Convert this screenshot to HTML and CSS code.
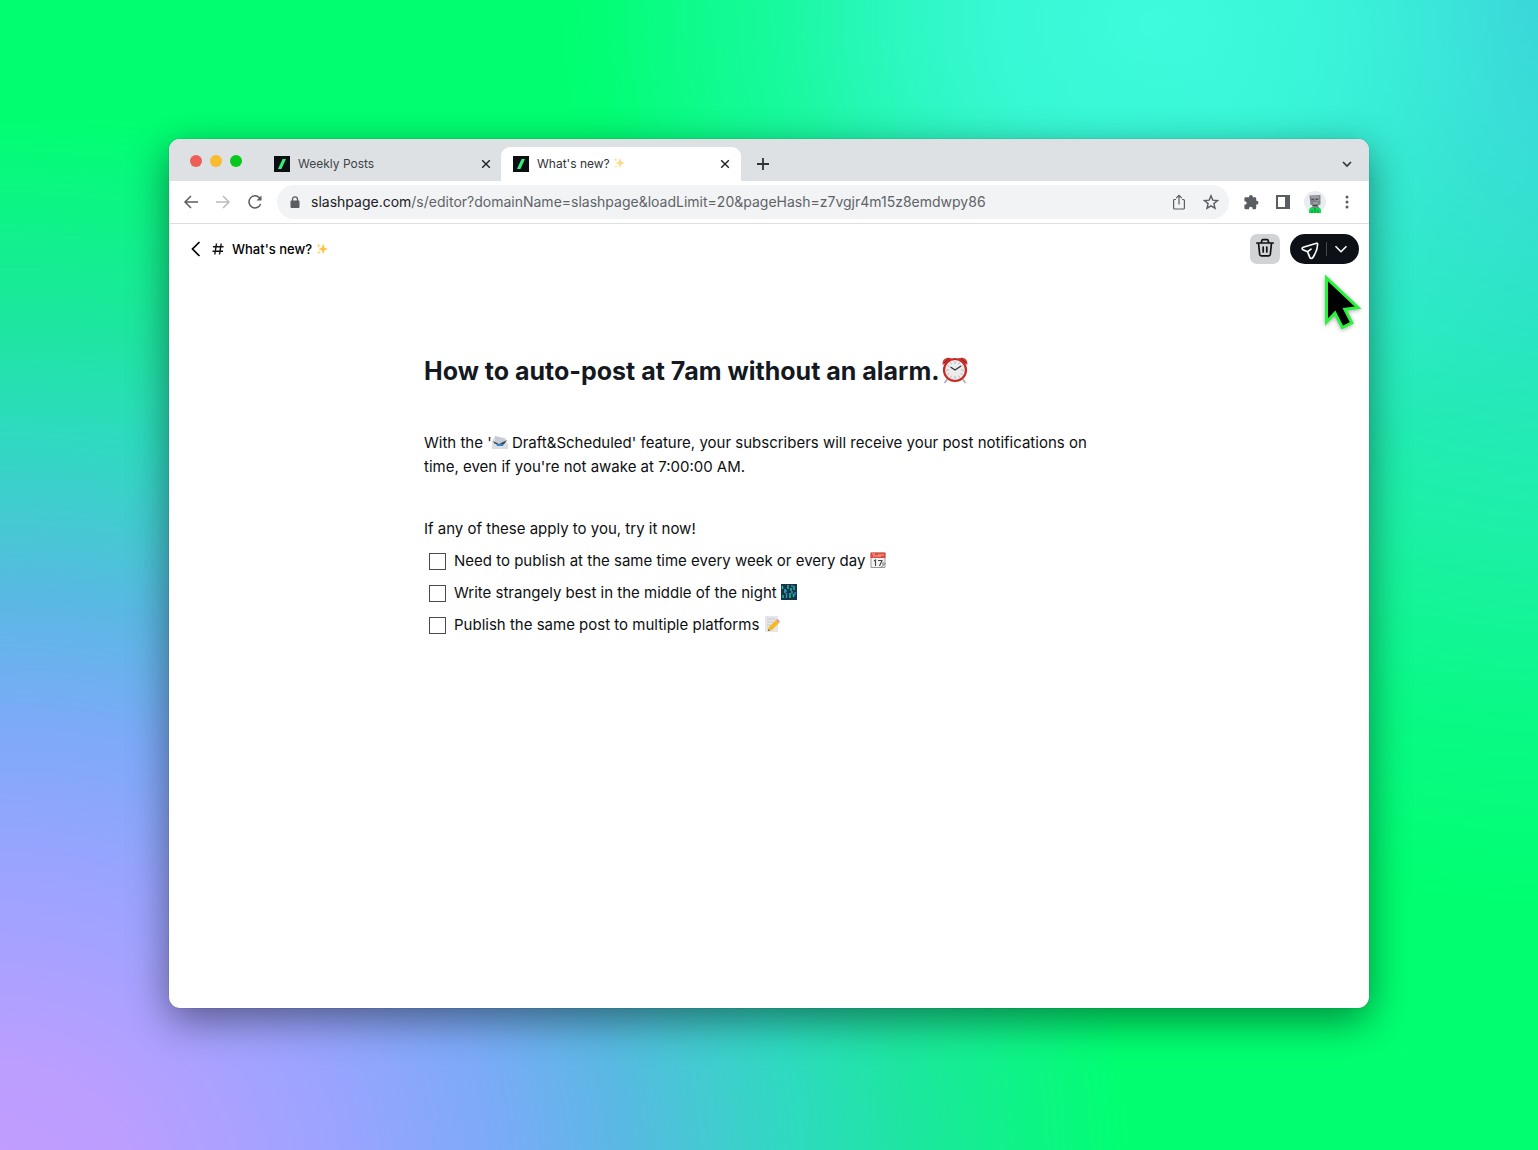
FILE: index.html
```html
<!DOCTYPE html>
<html lang="en">
<head>
<meta charset="utf-8">
<meta name="viewport" content="width=device-width, initial-scale=1">
<title>What's new?</title>
<link rel="stylesheet" href="styles.css">
</head>
<body>
<svg width="0" height="0" class="defs" aria-hidden="true">
  <symbol id="slash" viewBox="0 0 16 16"><path fill="#0b0f14" d="M0 0h16v16H0z"/><path fill="#34f07a" d="M8.6 3h3.4L7.4 13H4z"/></symbol>
  <symbol id="cross" viewBox="0 0 10 10"><path d="M1.2 1.2l7.6 7.6M8.8 1.2L1.2 8.8" fill="none" stroke="#202124" stroke-width="1.4"/></symbol>
  <symbol id="sparkles" viewBox="0 0 16 16"><path fill="#fbc33c" d="M9.500 1l1.800 5.200L16 8l-4.700 1.800L9.500 15 7.700 9.800 3 8l4.700-1.800z"/><path fill="#fbdc8c" d="M3.500 0l1 2.500L7 3.500l-2.500 1-1 2.500-1-2.500L0 3.500l2.500-1zM4 9.500l.9 2.100 2.100.9-2.100.9L4 15.500l-.9-2.100-2.100-.9 2.100-.9z"/></symbol>
</svg>
<main class="window">
  <header class="tabstrip">
    <div class="lights"><i class="light red"></i><i class="light yellow"></i><i class="light green"></i></div>
    <div class="tab">
      <svg class="favicon"><use href="#slash"/></svg>
      <span class="tab-title">Weekly Posts</span>
      <button class="plain" aria-label="Close tab"><svg width="10" height="10"><use href="#cross"/></svg></button>
    </div>
    <div class="tab active">
      <svg class="favicon"><use href="#slash"/></svg>
      <span class="tab-title">What's new? <svg class="spark faded"><use href="#sparkles"/></svg></span>
      <button class="plain" aria-label="Close tab"><svg width="10" height="10"><use href="#cross"/></svg></button>
    </div>
    <button class="plain new-tab" aria-label="New tab"><svg width="14" height="14" viewBox="0 0 14 14"><path d="M7 1v12M1 7h12" stroke="#303236" stroke-width="1.800"/></svg></button>
    <button class="plain tab-menu" aria-label="Search tabs"><svg width="12" height="12" viewBox="0 0 12 12"><path d="M2 4l4 4 4-4" fill="none" stroke="#303236" stroke-width="1.600"/></svg></button>
  </header>
  <nav class="toolbar">
    <button class="plain" aria-label="Back"><svg width="16" height="16" viewBox="0 0 16 16"><path d="M15 8H2M8 2L2 8l6 6" fill="none" stroke="#5a5d61" stroke-width="1.500"/></svg></button>
    <button class="plain" aria-label="Forward"><svg width="16" height="16" viewBox="0 0 16 16"><path d="M1 8h13M8 2l6 6-6 6" fill="none" stroke="#b9bcc0" stroke-width="1.500"/></svg></button>
    <button class="plain" aria-label="Reload"><svg width="16" height="16" viewBox="0 0 16 16"><path d="M13.600 10a6 6 0 1 1-1.200-6.200L13.500 5" fill="none" stroke="#5a5d61" stroke-width="1.500"/><path fill="#5a5d61" d="M14.500 1.500v5h-5z"/></svg></button>
    <div class="address">
      <svg class="lock" width="10" height="12" viewBox="0 0 10 12"><path d="M2.500 5V3.300a2.500 2.500 0 0 1 5 0V5" fill="none" stroke="#5a5d61" stroke-width="1.300"/><rect x="0.500" y="4.500" width="9" height="7.500" rx="1" fill="#5a5d61"/></svg>
      <label class="host" for="url">slashpage.com</label><input class="path" id="url" type="text" value="/s/editor?domainName=slashpage&amp;loadLimit=20&amp;pageHash=z7vgjr4m15z8emdwpy86">
      <button class="plain" aria-label="Share"><svg width="16" height="16" viewBox="0 0 16 16"><path d="M5 5.500H3.600a1 1 0 0 0-1 1V14a1 1 0 0 0 1 1h8.800a1 1 0 0 0 1-1V6.500a1 1 0 0 0-1-1H11M8 10.500V1.500M5.200 4.200L8 1.400l2.800 2.800" fill="none" stroke="#5a5d61" stroke-width="1.200"/></svg></button>
      <button class="plain" aria-label="Bookmark"><svg width="16" height="16" viewBox="0 0 16 16"><path d="M8 1.800l1.800 4.300 4.700.4-3.600 3.100 1.100 4.600L8 11.800l-4 2.400 1.100-4.600L1.500 6.500l4.700-.4z" fill="none" stroke="#5a5d61" stroke-width="1.400"/></svg></button>
    </div>
    <button class="plain" aria-label="Extensions"><svg width="16" height="16" viewBox="0 0 16 16"><path fill="#5a5d61" d="M6 3.200V2.800a1.900 1.900 0 0 1 3.800 0v.4H12a1.200 1.200 0 0 1 1.200 1.200v2.400h.4a1.900 1.900 0 0 1 0 3.800h-.4V14a1.200 1.200 0 0 1-1.200 1.200H9.600v-.6a1.800 1.800 0 0 0-3.600 0v.6H2.600A1.200 1.200 0 0 1 1.400 14v-3.200h.5a1.800 1.800 0 0 0 0-3.600h-.5V4.400a1.200 1.200 0 0 1 1.200-1.200z"/></svg></button>
    <button class="plain" aria-label="Side panel"><svg width="16" height="16" viewBox="0 0 16 16"><path d="M2 2h12v12H2z" fill="none" stroke="#5a5d61" stroke-width="2"/><path fill="#5a5d61" d="M10 2h5v12h-5z"/></svg></button>
    <button class="plain profile" aria-label="Profile"><svg width="22" height="22" viewBox="0 0 22 22"><circle cx="11" cy="11" r="11" fill="#e9edf2"/><path fill="#10d850" d="M5 22c-.5-4 1-6 4-6h4c3 0 4.500 2 4 6z"/><path d="M8 19v3M14 19v3M11 16v6" stroke="#0a8a35"/><path fill="#808386" d="M5.500 4.500L16.500 4v9.500l-2 .5v3h-6v-3h-2z"/><path d="M7 6h8M12 9h3M9 12h5" stroke="#b8babc" stroke-width="1.200"/><path d="M7.500 8.500h2M12 8.500h2M8.500 14.500h5" stroke="#44474a"/></svg></button>
    <button class="plain" aria-label="Menu"><svg width="16" height="16" viewBox="0 0 16 16"><g fill="#5a5d61"><circle cx="8" cy="3" r="1.500"/><circle cx="8" cy="8" r="1.500"/><circle cx="8" cy="13" r="1.500"/></g></svg></button>
  </nav>
  <div class="page-bar">
    <button class="plain" aria-label="Go back"><svg width="16" height="16" viewBox="0 0 16 16"><path d="M11.500 1L4.500 8l7 7" fill="none" stroke="#000" stroke-width="1.700"/></svg></button>
    <svg width="12" height="12" viewBox="0 0 12 12"><path d="M4.500.5L2.800 11.500M9.200.5L7.500 11.500M1 3.700h10.500M.5 8.300H11" fill="none" stroke="#111" stroke-width="1.400"/></svg>
    <span class="crumb">What's new? <svg class="spark"><use href="#sparkles"/></svg></span>
    <button class="trash" aria-label="Delete"><svg width="20" height="22" viewBox="0 0 20 22"><g fill="none" stroke="#101214" stroke-width="1.700" stroke-linecap="round" stroke-linejoin="round"><path d="M1.800 5h16.400M3.500 5l1.200 11.500a1.500 1.500 0 0 0 1.500 1.300h7.600a1.500 1.500 0 0 0 1.500-1.300L16.500 5M6.200 4.800L7 2.300a1 1 0 0 1 1-.7h4a1 1 0 0 1 1 .7l.8 2.500M8.200 9v5M11.800 9v5"/></g></svg></button>
    <div class="publish">
      <button class="plain send" aria-label="Publish"><svg width="18" height="18" viewBox="0 0 18 18"><path d="M15.500 1.200L2.200 5.200c-1.300.4-1.400 2-.2 2.600l4.600 2 2.200 5.600c.6 1.400 2.300 1.400 3.100.1C14.500 11.500 16.500 7 16.600 2.200c0-.8-.5-1.200-1.100-1zM6.800 9.700l3.200-2.500" fill="none" stroke="#fff" stroke-width="1.700" stroke-linejoin="round" stroke-linecap="round"/></svg></button>
      <button class="plain more" aria-label="Publish options"><svg width="14" height="14" viewBox="0 0 14 14"><path d="M1.500 4.200L7 9.700l5.500-5.500" fill="none" stroke="#fff" stroke-width="1.600"/></svg></button>
      <svg class="cursor" width="48" height="64" viewBox="0 0 48 64"><path d="M8.500 8v44l8.500-9 7.300 14.500 9.500-4.700-7-13.600 13.200-1.500z" fill="#000" stroke="#29f23c" stroke-width="3"/></svg>
    </div>
  </div>
  <article class="post">
    <h1>How to auto-post at 7am without an alarm.<svg class="clock" viewBox="0 0 26 28" aria-hidden="true"><path d="M5.500 23L2.500 27M20.500 23l3 4" stroke="#aaa" stroke-width="1.500"/><path fill="#d23a35" d="M.8 9C-.5 4 4 0 10 2.500zM25.200 9C26.500 4 22 0 16 2.500z"/><path d="M2 7l5-4.500M24 7l-5-4.500" stroke="#7c1d1b"/><circle cx="13" cy="14" r="11" fill="#ececec" stroke="#c62b26" stroke-width="2.200"/><path d="M13 5v3M13 20v3M4 14h3M19 14h3M8.500 6.300l1 2M17.500 6.300l-1 2M5.300 9.500l2 1M20.700 9.500l-2 1M5.300 18.500l2-1M20.700 18.500l-2-1M8.500 21.700l1-2M17.500 21.700l-1-2" stroke="#aaa" stroke-width=".8"/><path d="M8.500 11l4.500 3 6-4" fill="none" stroke="#333" stroke-width="1.200"/></svg></h1>
    <p class="intro">With the '<svg class="emoji" viewBox="0 0 16 16" aria-hidden="true"><path fill="#dfe2e4" d="M3 2l11 2 2 11H0V7z"/><path fill="#c5cbd0" d="M3 2l10 3-1 5-9-1z"/><path fill="#3d4852" d="M1 7l6 3 8-4-4 6-8-1z"/><path fill="#2f83c8" d="M4 10h8l-1 2H5z"/><path fill="#dcdfe2" d="M0 9l4 1 1 2h6l1-2 4-1v6H0z"/></svg> Draft&amp;Scheduled' feature, your subscribers will receive your post notifications on time, even if you're not awake at 7:00:00 AM.</p>
    <p class="lead">If any of these apply to you, try it now!</p>
    <ul class="checks">
      <li><label><input type="checkbox"><span>Need to publish at the same time every week or every day <svg class="emoji" viewBox="0 0 16 16" aria-hidden="true"><path fill="#f3f3f3" stroke="#999" d="M1 1h14v14.500H1z"/><path fill="#df4940" d="M.5.500h15V6H.5z"/><path stroke="#f5aaa4" d="M2 2h3M8 3h6M3 4h8"/><path d="M4 9l1.500-1v6M8 8.500h4L9.500 14" fill="none" stroke="#444" stroke-width="1.100"/><path d="M15.500 11L11 15.500M13 10v3" stroke="#777"/></svg></span></label></li>
      <li><label><input type="checkbox"><span>Write strangely best in the middle of the night <svg class="emoji" viewBox="0 0 16 16" aria-hidden="true"><path fill="#163548" d="M0 0h16v16H0z"/><path d="M1.500 2v3M4 5v4M7 1v4M10 4v3M13 2v4M2 11v3M9 9v5M12.500 10v3" stroke="#1fc7a0" stroke-width="1.400"/><path d="M5.500 9v5M11 7v3M14 8v3M3 7h3M10 2h2" stroke="#2f8dc8" stroke-width="1.400"/></svg></span></label></li>
      <li><label><input type="checkbox"><span>Publish the same post to multiple platforms <svg class="emoji" viewBox="0 0 16 16" aria-hidden="true"><path fill="#e6e6e6" d="M1 0h13v16H1z"/><path d="M3 3h8M3 6h6M3 9h4M3 12h3" stroke="#bfc3c6" stroke-width=".8"/><path fill="#f5b921" d="M5 11l7-7 3 3-7 7-4 1z"/><path fill="#e88a90" d="M12 4l1.500-1 2.500 2.500L15 7z"/><path fill="#665243" d="M4.500 13L4 15l2-.5z"/></svg></span></label></li>
    </ul>
  </article>
</main>
</body>
</html>
```
FILE: styles.css
```css
* { box-sizing: border-box; }

body {
  margin: 0;
  min-height: 100vh;
  display: flex;
  padding: 139px 169px 142px;
  font-family: Inter, "Liberation Sans", sans-serif;
  font-size: 15px;
  line-height: 24px;
  color: #0d0f11;
  background:
    radial-gradient(ellipse 36% 40% at 75% 2%, #3dfbdc 0%, rgba(60, 251, 220, .8) 30%, rgba(60, 251, 216, .3) 65%, rgba(60, 251, 216, 0) 100%),
    radial-gradient(ellipse 68% 83% at 104% -4%, #3cc4dc 0%, #37d4d6 20%, #28e6c0 42%, #1cf0a6 62%, rgba(12, 248, 140, .8) 80%, rgba(0, 255, 112, 0) 100%),
    radial-gradient(ellipse 75% 96% at 0% 104%, #c29cff 0%, #bb9eff 12%, #98a4ff 31%, #7caaf8 43%, #5ab8e4 54%, #42cbd0 62%, #2edac0 69%, #1de6a0 79%, rgba(0, 255, 112, 0) 98%),
    #00ff70;
}

.defs { position: absolute; }
svg { flex: none; }

.plain {
  display: grid;
  place-items: center;
  padding: 0;
  border: 0;
  background: none;
}

.window {
  flex: 1;
  min-width: 0;
  background: #fff;
  border-radius: 11px;
  box-shadow: 0 0 1px rgba(0, 0, 0, .5), 0 12px 40px rgba(0, 0, 0, .46);
}

.tabstrip {
  display: flex;
  align-items: flex-end;
  height: 42px;
  padding: 0 14px 0 21px;
  background: #dee1e4;
  border-radius: 11px 11px 0 0;
}

.lights { display: flex; gap: 8px; width: 72px; padding-bottom: 14px; }
.light { width: 12px; height: 12px; border-radius: 50%; }
.red { background: #ec5f57; }
.yellow { background: #f8bc2d; }
.green { background: #08c81e; }

.tab {
  display: flex;
  align-items: center;
  gap: 8px;
  width: 239px;
  height: 34px;
  padding: 0 10px 0 12px;
  border-radius: 9px 9px 0 0;
  font-size: 12px;
  color: #404347;
}
.tab.active { width: 240px; padding-right: 11px; background: #fff; color: #303236; }
.favicon { width: 16px; height: 16px; }
.tab-title { flex: 1; white-space: nowrap; }

.spark { width: 12px; height: 12px; vertical-align: -1px; }
.faded { opacity: .6; }

.new-tab { width: 44px; height: 34px; }
.tab-menu { width: 16px; height: 34px; margin-left: auto; }

.toolbar {
  display: flex;
  align-items: center;
  gap: 16px;
  height: 43px;
  padding: 0 14px;
  border-bottom: 1px solid #dcdee0;
}

.address {
  flex: 1;
  min-width: 0;
  display: flex;
  align-items: center;
  height: 34px;
  margin: 0 -2px;
  padding: 0 10px 0 13px;
  border-radius: 17px;
  background: #f1f3f4;
  font-size: 14px;
}
.lock { margin-right: 11px; }
.host { color: #202124; }
.path {
  flex: 1;
  min-width: 0;
  padding: 0;
  border: 0;
  outline: 0;
  background: none;
  font: inherit;
  color: #5f6368;
}
.address .plain { width: 16px; margin-left: 16px; }
.toolbar > .plain { width: 16px; }
.toolbar > .profile { width: 22px; margin: 0 -3px; }

.page-bar {
  display: flex;
  align-items: center;
  gap: 8px;
  height: 50px;
  padding: 0 10px 0 19px;
  font-size: 13px;
  font-weight: 500;
  color: #000;
}
.crumb { flex: 1; }

.trash {
  display: grid;
  place-items: center;
  width: 30px;
  height: 30px;
  padding: 0;
  border: 0;
  border-radius: 7px;
  background: #d2d3d5;
}

.publish {
  position: relative;
  display: flex;
  align-items: center;
  height: 30px;
  margin-left: 2px;
  border-radius: 15px;
  background: #0d1117;
}
.send { width: 37px; height: 14px; padding-left: 3px; border-right: 1px solid #464a50; }
.more { width: 32px; padding-right: 4px; }

.cursor {
  position: absolute;
  left: 28px;
  top: 36px;
  filter: drop-shadow(0 1px 2px rgba(0, 0, 0, .35));
}

.post { max-width: 690px; margin: 0 auto; padding-top: 80px; }

h1 {
  margin: 0;
  font-size: 25px;
  line-height: 34px;
  font-weight: 700;
  color: #14191f;
}
.clock { width: 26px; height: 28px; margin-left: 2px; vertical-align: -4px; }

p { margin: 0; }
.intro { padding-top: 43px; }
.lead { padding-top: 38px; }

.emoji { width: 16px; height: 16px; vertical-align: -2px; }

.checks { list-style: none; margin: 0; padding: 8px 0 0 5px; display: grid; gap: 8px; }
.checks label { display: flex; align-items: center; gap: 8px; }
.checks input {
  appearance: none;
  width: 17px;
  height: 17px;
  margin: 0;
  border: 1px solid #4a4a4a;
  background: #fff;
}
```
